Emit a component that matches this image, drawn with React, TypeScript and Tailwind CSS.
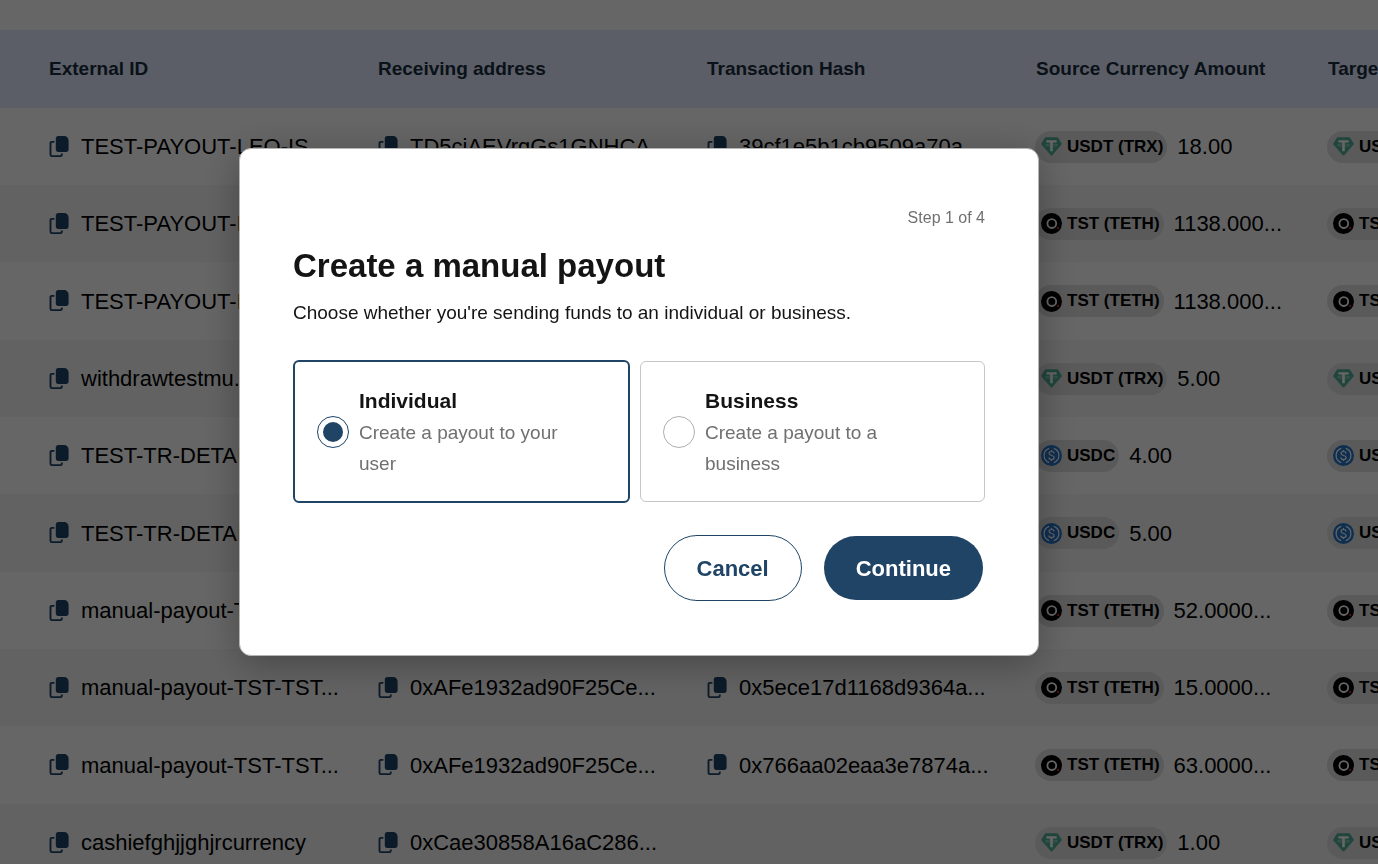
import { useState } from "react";

type Currency = "USDT (TRX)" | "TST (TETH)" | "USDC";

type Payout = {
  externalId: string;
  address: string;
  hash: string;
  currency: Currency;
  amount: string;
};

const PAYOUTS: Payout[] = [
  { externalId: "TEST-PAYOUT-LEO-IS...", address: "TD5ciAEVrgGs1GNHCA...", hash: "39cf1e5b1cb9509a70a...", currency: "USDT (TRX)", amount: "18.00" },
  { externalId: "TEST-PAYOUT-L...", address: "", hash: "", currency: "TST (TETH)", amount: "1138.000..." },
  { externalId: "TEST-PAYOUT-L...", address: "", hash: "", currency: "TST (TETH)", amount: "1138.000..." },
  { externalId: "withdrawtestmu...", address: "", hash: "", currency: "USDT (TRX)", amount: "5.00" },
  { externalId: "TEST-TR-DETAILS...", address: "", hash: "", currency: "USDC", amount: "4.00" },
  { externalId: "TEST-TR-DETAILS...", address: "", hash: "", currency: "USDC", amount: "5.00" },
  { externalId: "manual-payout-TST-TST...", address: "", hash: "", currency: "TST (TETH)", amount: "52.0000..." },
  { externalId: "manual-payout-TST-TST...", address: "0xAFe1932ad90F25Ce...", hash: "0x5ece17d1168d9364a...", currency: "TST (TETH)", amount: "15.0000..." },
  { externalId: "manual-payout-TST-TST...", address: "0xAFe1932ad90F25Ce...", hash: "0x766aa02eaa3e7874a...", currency: "TST (TETH)", amount: "63.0000..." },
  { externalId: "cashiefghjjghjrcurrency", address: "0xCae30858A16aC286...", hash: "", currency: "USDT (TRX)", amount: "1.00" },
];

const OPTIONS = [
  { value: "individual", title: "Individual", description: "Create a payout to your user" },
  { value: "business", title: "Business", description: "Create a payout to a business" },
];

function CopyIcon() {
  return (
    <svg width="20" height="22" viewBox="0 0 20 22" fill="none" aria-hidden="true">
      <path d="M9.200 0H15c2.500 0 4.600 2 4.600 4.600V13.600c0 1.300-1 2.400-2.400 2.400h-8c-1.300 0-2.400-1-2.400-2.400V2.400C6.800 1 7.900 0 9.200 0Z" fill="currentColor" />
      <path d="M5.400 5.900H2.800c-.8 0-1.300.5-1.300 1.300V18.800c0 .8.500 1.300 1.300 1.300h8.700c.8 0 1.300-.5 1.300-1.300V17.400" stroke="currentColor" strokeWidth="1.900" />
    </svg>
  );
}

function TetherIcon() {
  return (
    <svg width="21" height="21" viewBox="0 0 21 21" aria-hidden="true">
      <path d="M4.800 1.200h11.400c.4 0 .7.2.9.500l3.600 5.800c.2.400.2.800-.1 1.100l-9.400 10.700c-.4.400-1 .4-1.400 0L.4 8.600c-.3-.3-.3-.7-.1-1.100L3.900 1.700c.2-.3.500-.5.900-.5Z" fill="#50af95" />
      <path d="M5.400 4.200h10.200v2.300h-3.800v8.700H9.200V6.500H5.400Z" fill="#fff" />
      <ellipse cx="10.500" cy="9.200" rx="6" ry="1.100" fill="none" stroke="#fff" strokeOpacity=".7" strokeWidth=".6" />
    </svg>
  );
}

function TestTokenIcon() {
  return (
    <svg width="21" height="21" viewBox="0 0 21 21" aria-hidden="true">
      <circle cx="10.500" cy="10.500" r="10.500" fill="#000" />
      <circle cx="10.800" cy="10.600" r="4.400" fill="none" stroke="#fff" strokeWidth="1.800" />
      <circle cx="17.200" cy="15" r="1" fill="#ff3030" />
    </svg>
  );
}

function UsdcIcon() {
  return (
    <svg width="21" height="21" viewBox="0 0 21 21" fill="none" aria-hidden="true">
      <circle cx="10.500" cy="10.500" r="10.500" fill="#2775ca" />
      <path d="M8.200 3.400a7.500 7.500 0 0 0 0 14.200M12.800 3.400a7.500 7.500 0 0 1 0 14.200" stroke="#fff" strokeWidth="1.200" />
      <path d="M13 8.500c0-1.200-1-2-2.500-2s-2.400.8-2.400 2c0 2.700 5 1.300 5 4 0 1.200-1.100 2-2.600 2s-2.600-.8-2.600-2M10.500 4.900v1.600M10.500 14.500v1.600" stroke="#fff" strokeWidth="1.200" />
    </svg>
  );
}

function CurrencyAmount({ currency, amount }: { currency: Currency; amount: string }) {
  return (
    <div className="flex items-center gap-2.5">
      <span className="flex h-8 items-center gap-[5px] rounded-full bg-[#e0e0e0] pr-1 pl-1.5 text-[17px] font-bold">
        {currency === "USDT (TRX)" && <TetherIcon />}
        {currency === "TST (TETH)" && <TestTokenIcon />}
        {currency === "USDC" && <UsdcIcon />}
        {currency}
      </span>
      <span>{amount}</span>
    </div>
  );
}

function CopyCell({ text, label }: { text: string; label: string }) {
  if (!text) return null;

  return (
    <div className="flex items-center gap-3">
      <button
        type="button"
        aria-label={`Copy ${label}`}
        onClick={() => navigator.clipboard.writeText(text)}
        className="text-[#1f4466]"
      >
        <CopyIcon />
      </button>
      <span>{text}</span>
    </div>
  );
}

function PayoutsTable() {
  return (
    <table className="w-[1660px] table-fixed text-left text-[22px] whitespace-nowrap text-black">
      <colgroup>
        <col className="w-[329px]" />
        <col className="w-[329px]" />
        <col className="w-[329px]" />
        <col className="w-[292px]" />
        <col />
      </colgroup>
      <thead>
        <tr className="h-[78px] bg-[#e3eaff] text-[19px] text-[#1b2f40]">
          <th className="pl-[49px] font-bold">External ID</th>
          <th className="pl-[49px] font-bold">Receiving address</th>
          <th className="pl-[49px] font-bold">Transaction Hash</th>
          <th className="pl-[49px] font-bold">Source Currency Amount</th>
          <th className="pl-[49px] font-bold">Target Currency Amount</th>
        </tr>
      </thead>
      <tbody>
        {PAYOUTS.map((payout, i) => (
          <tr key={i} className="h-[77px] even:bg-[#f6f6f6] nth-[3n]:h-[78px]">
            <td className="pl-[49px]">
              <CopyCell text={payout.externalId} label="external ID" />
            </td>
            <td className="pl-[49px]">
              <CopyCell text={payout.address} label="receiving address" />
            </td>
            <td className="pl-[49px]">
              <CopyCell text={payout.hash} label="transaction hash" />
            </td>
            <td className="pl-12">
              <CurrencyAmount currency={payout.currency} amount={payout.amount} />
            </td>
            <td className="pl-12">
              <CurrencyAmount currency={payout.currency} amount={payout.amount} />
            </td>
          </tr>
        ))}
      </tbody>
    </table>
  );
}

function PayoutDialog() {
  const [recipient, setRecipient] = useState("individual");

  return (
    <form
      role="dialog"
      aria-labelledby="payout-title"
      onSubmit={(e) => e.preventDefault()}
      className="w-full max-w-[800px] rounded-xl border border-[#b4b4b4] bg-white px-[53px] pt-[57px] pb-[54px] text-[#141414] shadow-[0_8px_40px_rgba(0,0,0,0.3)]"
    >
      <p className="text-right text-base leading-6 text-[#707070]">Step 1 of 4</p>
      <h1 id="payout-title" className="mt-4 text-[33px] leading-10 font-bold">
        Create a manual payout
      </h1>
      <p className="mt-3 text-[19px] leading-[30px]">
        Choose whether you're sending funds to an individual or business.
      </p>

      <div className="mt-8 grid grid-cols-[337fr_345fr] items-center gap-2.5">
        {OPTIONS.map((option) => (
          <label
            key={option.value}
            className="flex items-center gap-2.5 rounded-md border border-[#c6c6c6] px-[22px] py-[22px] has-checked:border-2 has-checked:border-[#1f4466]"
          >
            <input
              type="radio"
              name="recipient"
              value={option.value}
              checked={recipient === option.value}
              onChange={() => setRecipient(option.value)}
              className="size-8 shrink-0 appearance-none rounded-full border border-[#b0b0b0] bg-clip-content p-[5px] checked:border-[#1f4466] checked:bg-[#1f4466]"
            />
            <span className="max-w-[230px]">
              <span className="block text-[21px] leading-[33px] font-bold">{option.title}</span>
              <span className="block text-[19px] leading-[31px] text-[#707070]">{option.description}</span>
            </span>
          </label>
        ))}
      </div>

      <div className="mt-8 flex items-center justify-end gap-[22px] pr-0.5 text-[22px] font-bold">
        <button type="button" className="h-[66px] rounded-full border border-[#1f4466] px-8 text-[#1f4466]">
          Cancel
        </button>
        <button type="submit" className="h-16 rounded-full bg-[#1f4466] px-8 text-white">
          Continue
        </button>
      </div>
    </form>
  );
}

export default function App() {
  return (
    <div className="h-screen overflow-hidden bg-white pt-[30px] font-['Liberation_Sans',Arial,sans-serif]">
      <PayoutsTable />

      {/* Overlay */}
      <div className="fixed inset-0 flex items-center justify-center bg-black/60 pr-[100px] pb-[60px]">
        <PayoutDialog />
      </div>
    </div>
  );
}
